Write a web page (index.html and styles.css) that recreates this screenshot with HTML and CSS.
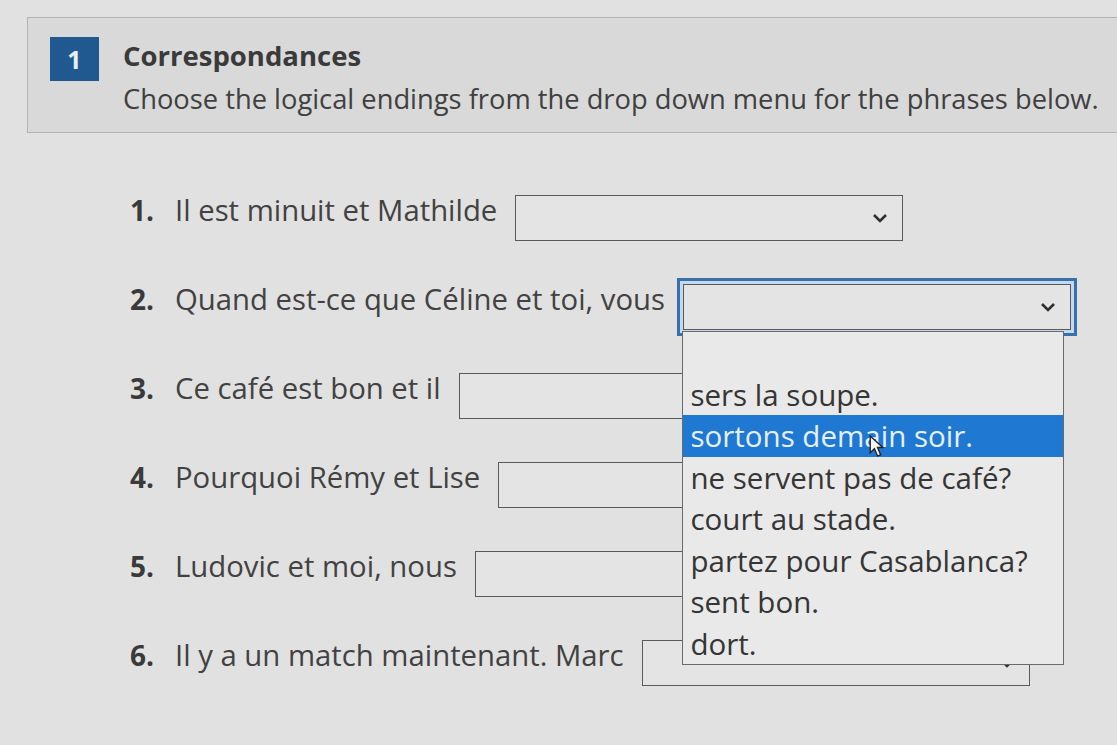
FILE: index.html
```html
<!DOCTYPE html>
<html lang="fr">
<head>
<meta charset="utf-8">
<title>Correspondances</title>
<link rel="stylesheet" href="styles.css">
</head>
<body>
<div class="page">
  <header class="head">
    <div class="badge">1</div>
    <div class="head-text">
      <div class="title">Correspondances</div>
      <div class="subtitle">Choose the logical endings from the drop down menu for the phrases below.</div>
    </div>
  </header>

  <ol class="items">
    <li class="item">
      <span class="num">1.</span>
      <span class="phrase">Il est minuit et Mathilde</span>
      <span class="select"><svg class="chev" viewBox="0 0 16 10"><path d="M2 2 L8 8 L14 2" /></svg></span>
    </li>
    <li class="item">
      <span class="num">2.</span>
      <span class="phrase">Quand est-ce que Céline et toi, vous</span>
      <span class="select focused"><svg class="chev" viewBox="0 0 16 10"><path d="M2 2 L8 8 L14 2" /></svg>
        <span class="menu">
          <span class="opt"></span>
          <span class="opt">sers la soupe.</span>
          <span class="opt hl">sortons demain soir.</span>
          <span class="opt">ne servent pas de café?</span>
          <span class="opt">court au stade.</span>
          <span class="opt">partez pour Casablanca?</span>
          <span class="opt">sent bon.</span>
          <span class="opt">dort.</span>
          <svg class="cursor" viewBox="0 0 14 22"><path d="M1 1 L1 17 L5 13 L8 20 L11 19 L8 12 L13 12 Z" /></svg>
        </span>
      </span>
    </li>
    <li class="item">
      <span class="num">3.</span>
      <span class="phrase">Ce café est bon et il</span>
      <span class="select"><svg class="chev" viewBox="0 0 16 10"><path d="M2 2 L8 8 L14 2" /></svg></span>
    </li>
    <li class="item">
      <span class="num">4.</span>
      <span class="phrase">Pourquoi Rémy et Lise</span>
      <span class="select"><svg class="chev" viewBox="0 0 16 10"><path d="M2 2 L8 8 L14 2" /></svg></span>
    </li>
    <li class="item">
      <span class="num">5.</span>
      <span class="phrase">Ludovic et moi, nous</span>
      <span class="select"><svg class="chev" viewBox="0 0 16 10"><path d="M2 2 L8 8 L14 2" /></svg></span>
    </li>
    <li class="item">
      <span class="num">6.</span>
      <span class="phrase">Il y a un match maintenant. Marc</span>
      <span class="select"><svg class="chev" viewBox="0 0 16 10"><path d="M2 2 L8 8 L14 2" /></svg></span>
    </li>
  </ol>
</div>
</body>
</html>
```

FILE: styles.css
```css
html, body {
  margin: 0;
  padding: 0;
}
body {
  background: #e1e1e1;
  font-family: "Open Sans", "Noto Sans", "Liberation Sans", sans-serif;
  color: #3b3b3b;
  width: 1117px;
  height: 745px;
  overflow: hidden;
}
.page {
  padding-top: 17px;
}
.head {
  margin-left: 27px;
  margin-right: -20px;
  height: 116px;
  box-sizing: border-box;
  background: #d9d9d9;
  border: 1.5px solid #b3b3b3;
  display: flex;
  align-items: flex-start;
  padding: 19px 0 0 22px;
  gap: 24px;
}
.badge {
  width: 49px;
  height: 44px;
  background: #1f5990;
  color: #e8eef5;
  font-weight: 700;
  font-size: 25px;
  line-height: 44px;
  text-align: center;
}
.head-text {
  display: flex;
  flex-direction: column;
}
.title {
  font-weight: 700;
  font-size: 27.5px;
  line-height: 38px;
  color: #3a3a3a;
}
.subtitle {
  margin-top: 5px;
  font-size: 27.3px;
  line-height: 38px;
  color: #404040;
  white-space: nowrap;
}
.items {
  list-style: none;
  margin: 0;
  padding: 62px 0 0 130px;
  display: flex;
  flex-direction: column;
  gap: 43px;
}
.item {
  display: flex;
  align-items: flex-start;
  height: 46px;
}
.num {
  width: 45px;
  font-weight: 700;
  font-size: 28px;
  line-height: 30px;
  color: #3a3a3a;
}
.phrase {
  font-size: 29.3px;
  line-height: 30px;
  color: #424242;
  white-space: nowrap;
}
.select {
  position: relative;
  margin-left: 18px;
  width: 388px;
  height: 46px;
  box-sizing: border-box;
  border: 1.5px solid #5a5a5a;
  background: #e4e4e4;
  display: flex;
  align-items: center;
  justify-content: flex-end;
  padding-right: 14px;
}
.chev {
  width: 16px;
  height: 10px;
  fill: none;
  stroke: #2e2e2e;
  stroke-width: 2.6;
}
.select.focused {
  box-shadow: 0 0 0 3px #c2d9ef, 0 0 0 6px #3a70aa;
}
.menu {
  position: absolute;
  left: -1.5px;
  top: 46px;
  width: 382px;
  box-sizing: border-box;
  background: #e9e9e9;
  border: 1.5px solid #6a6a6a;
  display: flex;
  flex-direction: column;
  z-index: 2;
}
.opt {
  height: 41.5px;
  line-height: 41.5px;
  padding-left: 7px;
  font-size: 29.5px;
  color: #353535;
  white-space: nowrap;
}
.opt.hl {
  background: #1f78d1;
  color: #e6f0fb;
}
.cursor {
  position: absolute;
  left: 186px;
  top: 103px;
  width: 15px;
  height: 23px;
  fill: #f4f4f4;
  stroke: #222;
  stroke-width: 1.3;
}
```
